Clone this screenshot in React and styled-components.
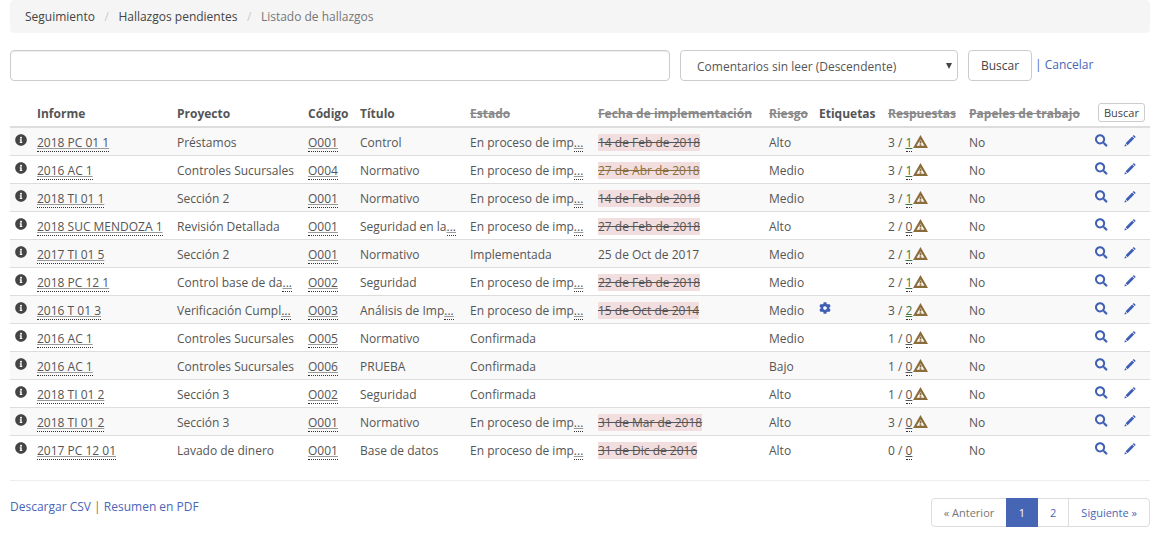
import styled, { createGlobalStyle } from "styled-components"
import { FaInfoCircle, FaSearch, FaCog } from "react-icons/fa"

const Global = createGlobalStyle`
html, body {
    margin:0;
    padding:0;
    background:#fff;
    font-family:"Open Sans", "Liberation Sans", sans-serif;
    font-size:12px;
    color:#555;
}
`
const Page = styled.div`
padding:0 10px;
width:1140px;
`
const Breadcrumb = styled.ol`
display:flex;
align-items:center;
height:33px;
margin:0;
padding:0 15px;
list-style:none;
background:#f5f5f5;
border-radius:4px;
box-sizing:border-box;
`
const Crumb = styled.li`
color:${props => props.$active ? "#777" : "#444"};
&:not(:last-child)::after {
    content:"/";
    color:#ccc;
    padding:0 9.5px;
}
`
const SearchForm = styled.form`
display:flex;
align-items:flex-start;
margin-top:17px;
height:31px;
`
const SearchInput = styled.input`
width:660px;
height:31px;
box-sizing:border-box;
border:1px solid #ccc;
border-radius:4px;
box-shadow:inset 0 1px 1px rgba(0,0,0,.075);
`
const SortSelect = styled.div`
position:relative;
width:278px;
height:31px;
margin-left:10px;
padding:0 0 0 16px;
box-sizing:border-box;
border:1px solid #ccc;
border-radius:4px;
line-height:32px;
color:#555;
&::after {
    content:"";
    position:absolute;
    right:5px;
    top:12px;
    border-left:3.5px solid transparent;
    border-right:3.5px solid transparent;
    border-top:6px solid #444;
}
`
const SearchButton = styled.button`
width:64px;
height:31px;
margin-left:10px;
padding:0;
background:#fff;
border:1px solid #ccc;
border-radius:4px;
font:inherit;
color:#444;
`
const CancelText = styled.span`
margin-left:3px;
line-height:29px;
color:#4a66b8;
`
const Table = styled.table`
width:1140px;
margin-top:18px;
table-layout:fixed;
border-collapse:collapse;
`
const HeadCell = styled.th`
height:28px;
padding:${props => props.$right ? "0 5px" : "2px 5px 0"};
box-sizing:border-box;
text-align:${props => props.$right ? "right" : "left"};
white-space:nowrap;
font-weight:700;
color:${props => props.$off ? "#888" : "#555"};
text-decoration:${props => props.$off ? "line-through" : "none"};
border-bottom:2px solid #ddd;
`
const TinyButton = styled.button`
height:19px;
width:47px;
padding:0;
background:#fff;
border:1px solid #ccc;
border-radius:3px;
font:inherit;
font-size:11px;
font-weight:400;
color:#444;
`
const Row = styled.tr`
background:${props => props.$odd ? "#f9f9f9" : "#fff"};
`
const Cell = styled.td`
height:28px;
padding:2px 5px 0;
box-sizing:border-box;
white-space:nowrap;
overflow:hidden;
border-bottom:1px solid #ddd;
vertical-align:middle;
${props => props.$last && "border-bottom:0;"}
`
const InfoIcon = styled(FaInfoCircle)`
display:block;
width:12px;
height:12px;
margin-top:-4px;
color:#444;
`
const Dotted = styled.span`
border-bottom:1px dotted #333;
color:#555;
text-decoration:underline;
text-decoration-color:#999;
`
const Rest = styled.span`
border-bottom:1px dotted #333;
text-decoration:underline;
text-decoration-color:#999;
`
const LateDate = styled.span`
display:inline-block;
background:#f2dede;
line-height:17px;
color:${props => props.$warn ? "#8a6d3b" : "#555"};
text-decoration:line-through;
`
const ReplyCount = styled.span`
border-bottom:1px dotted #333;
text-decoration:underline;
color:${props => props.$new ? "#3c763d" : "#555"};
`
const Alert = styled.svg`
width:15px;
height:13px;
margin-left:1px;
vertical-align:-1px;
color:#8a6d3b;
`
const CogIcon = styled(FaCog)`
display:block;
width:12px;
height:12px;
margin-top:-4px;
color:#3f5fb5;
`
const Actions = styled.div`
display:flex;
justify-content:flex-end;
gap:16px;
padding-right:9px;
margin-top:-4px;
color:#3f5fb5;
`
const ActionSearch = styled(FaSearch)`
width:13px;
height:13px;
`
const ActionEdit = styled.svg`
width:13px;
height:13px;
`
const Footer = styled.div`
display:flex;
justify-content:space-between;
align-items:flex-start;
margin-top:17px;
padding-top:17px;
border-top:1px solid #eee;
`
const Downloads = styled.div`
color:#4a66b8;
`
const Sep = styled.span`
color:#8a6d3b;
`
const Pager = styled.div`
display:flex;
height:29px;
border:1px solid #ddd;
border-radius:4px;
box-sizing:border-box;
font-size:11px;
`
const PageItem = styled.span`
padding:0 ${props => props.$pad}px;
margin:${props => props.$active ? "-1px 0" : "0"};
line-height:${props => props.$active ? "29px" : "27px"};
color:${props => props.$active ? "#fff" : props.$muted ? "#777" : "#4a66b8"};
background:${props => props.$active ? "#4665b5" : "transparent"};
border-right:${props => props.$divided ? "1px solid #ddd" : "0"};
`

const cols = [22, 140, 131, 52, 110, 128, 171, 50, 69, 81, 126, 60]

const rows = [
    { informe:"2018 PC 01 1", proyecto:"Préstamos", codigo:"O001", titulo:"Control", estado:"En proceso de imp", fecha:"14 de Feb de 2018", riesgo:"Alto", r:[3,1] },
    { informe:"2016 AC 1", proyecto:"Controles Sucursales", codigo:"O004", titulo:"Normativo", estado:"En proceso de imp", fecha:"27 de Abr de 2018", warn:true, riesgo:"Medio", r:[3,1] },
    { informe:"2018 TI 01 1", proyecto:"Sección 2", codigo:"O001", titulo:"Normativo", estado:"En proceso de imp", fecha:"14 de Feb de 2018", riesgo:"Medio", r:[3,1] },
    { informe:"2018 SUC MENDOZA 1", proyecto:"Revisión Detallada", codigo:"O001", titulo:"Seguridad en la", cut:true, estado:"En proceso de imp", fecha:"27 de Feb de 2018", riesgo:"Alto", r:[2,0] },
    { informe:"2017 TI 01 5", proyecto:"Sección 2", codigo:"O001", titulo:"Normativo", estado:"Implementada", plain:"25 de Oct de 2017", riesgo:"Medio", r:[2,1] },
    { informe:"2018 PC 12 1", proyecto:"Control base de da", pcut:true, codigo:"O002", titulo:"Seguridad", estado:"En proceso de imp", fecha:"22 de Feb de 2018", riesgo:"Medio", r:[2,1] },
    { informe:"2016 T 01 3", proyecto:"Verificación Cumpl", pcut:true, codigo:"O003", titulo:"Análisis de Imp", cut:true, estado:"En proceso de imp", fecha:"15 de Oct de 2014", riesgo:"Medio", tag:true, r:[3,2] },
    { informe:"2016 AC 1", proyecto:"Controles Sucursales", codigo:"O005", titulo:"Normativo", estado:"Confirmada", riesgo:"Medio", r:[1,0] },
    { informe:"2016 AC 1", proyecto:"Controles Sucursales", codigo:"O006", titulo:"PRUEBA", estado:"Confirmada", riesgo:"Bajo", r:[1,0] },
    { informe:"2018 TI 01 2", proyecto:"Sección 3", codigo:"O002", titulo:"Seguridad", estado:"Confirmada", riesgo:"Alto", r:[1,0] },
    { informe:"2018 TI 01 2", proyecto:"Sección 3", codigo:"O001", titulo:"Normativo", estado:"En proceso de imp", fecha:"31 de Mar de 2018", riesgo:"Alto", r:[3,0] },
    { informe:"2017 PC 12 01", proyecto:"Lavado de dinero", codigo:"O001", titulo:"Base de datos", estado:"En proceso de imp", fecha:"31 de Dic de 2016", riesgo:"Alto", r:[0,0], noAlert:true },
]

const AlertIcon = () => (
    <Alert viewBox="0 0 15 13">
        <path fill="currentColor" fillRule="evenodd" d="M7.5 0 L15 13 H0 Z M7.5 4.4 L3.6 10.8 H11.4 Z" />
        <rect x="6.6" y="5.6" width="1.8" height="3" fill="currentColor" />
        <rect x="6.6" y="9.2" width="1.8" height="1.6" fill="currentColor" />
    </Alert>
)

const App = () => {
    return (
        <Page>
            <Global />
            <Breadcrumb>
                <Crumb>Seguimiento</Crumb>
                <Crumb>Hallazgos pendientes</Crumb>
                <Crumb $active>Listado de hallazgos</Crumb>
            </Breadcrumb>
            <SearchForm onSubmit={e => e.preventDefault()}>
                <SearchInput />
                <SortSelect>Comentarios sin leer (Descendente)</SortSelect>
                <SearchButton>Buscar</SearchButton>
                <CancelText>| Cancelar</CancelText>
            </SearchForm>
            <Table>
                <colgroup>
                    {cols.map((w, i) => <col key={i} width={w} />)}
                </colgroup>
                <thead>
                    <tr>
                        <HeadCell />
                        <HeadCell>Informe</HeadCell>
                        <HeadCell>Proyecto</HeadCell>
                        <HeadCell>Código</HeadCell>
                        <HeadCell>Título</HeadCell>
                        <HeadCell $off>Estado</HeadCell>
                        <HeadCell $off>Fecha de implementación</HeadCell>
                        <HeadCell $off>Riesgo</HeadCell>
                        <HeadCell>Etiquetas</HeadCell>
                        <HeadCell $off>Respuestas</HeadCell>
                        <HeadCell $off>Papeles de trabajo</HeadCell>
                        <HeadCell $right><TinyButton>Buscar</TinyButton></HeadCell>
                    </tr>
                </thead>
                <tbody>
                    {rows.map((r, i) => {
                        const last = i === rows.length - 1
                        return (
                            <Row key={i} $odd={i % 2 === 0}>
                                <Cell $last={last}><InfoIcon /></Cell>
                                <Cell $last={last}><Dotted>{r.informe}</Dotted></Cell>
                                <Cell $last={last}>{r.proyecto}{r.pcut && <Rest>...</Rest>}</Cell>
                                <Cell $last={last}><Dotted>{r.codigo}</Dotted></Cell>
                                <Cell $last={last}>{r.titulo}{r.cut && <Rest>...</Rest>}</Cell>
                                <Cell $last={last}>{r.estado}{r.estado.endsWith("imp") && <Rest>...</Rest>}</Cell>
                                <Cell $last={last}>
                                    {r.fecha && <LateDate $warn={r.warn}>{r.fecha}</LateDate>}
                                    {r.plain}
                                </Cell>
                                <Cell $last={last}>{r.riesgo}</Cell>
                                <Cell $last={last}>{r.tag && <CogIcon />}</Cell>
                                <Cell $last={last}>
                                    {r.r[0]} / <ReplyCount $new={r.r[1] > 0}>{r.r[1]}</ReplyCount>
                                    {!r.noAlert && <AlertIcon />}
                                </Cell>
                                <Cell $last={last}>No</Cell>
                                <Cell $last={last}>
                                    <Actions>
                                        <ActionSearch />
                                        <ActionEdit viewBox="0 0 14 14">
                                            <path fill="currentColor" d="M11 0.8 L13.2 3 L12 4.2 L9.8 2 Z M9.2 2.6 L11.4 4.8 L4 12.2 L1.8 10 Z M1.2 10.8 L3.2 12.8 L0.4 13.6 Z" />
                                        </ActionEdit>
                                    </Actions>
                                </Cell>
                            </Row>
                        )
                    })}
                </tbody>
            </Table>
            <Footer>
                <Downloads>Descargar CSV <Sep>|</Sep> Resumen en PDF</Downloads>
                <Pager>
                    <PageItem $pad={11.5} $muted>« Anterior</PageItem>
                    <PageItem $pad={13} $active>1</PageItem>
                    <PageItem $pad={12} $divided>2</PageItem>
                    <PageItem $pad={12}>Siguiente »</PageItem>
                </Pager>
            </Footer>
        </Page>
    )
}
export default App
